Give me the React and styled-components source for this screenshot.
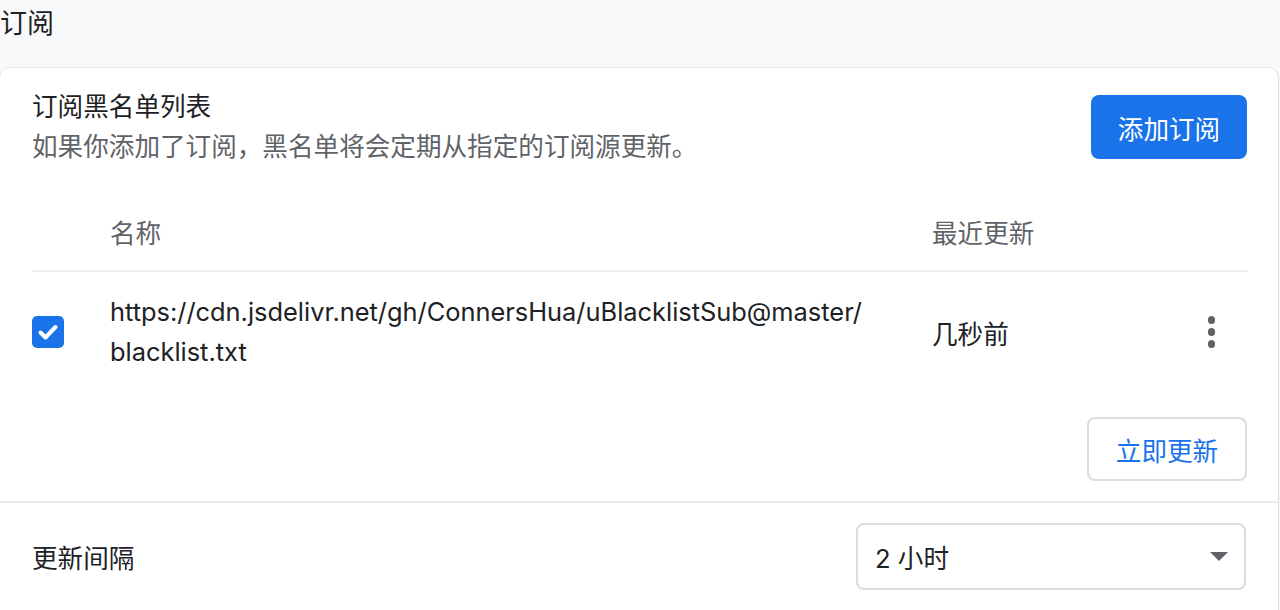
import React from "react";
import styled, { createGlobalStyle } from "styled-components";

const GlobalStyle = createGlobalStyle`
  html, body {
    margin: 0;
    padding: 0;
    background: #f8f9fa;
    font-family: Inter, "Noto Sans CJK SC", sans-serif;
    color: #202124;
  }
`;

export default function App() {
  return (
    <>
      <GlobalStyle />
      <Page>
        <PageTitle>订阅</PageTitle>
        <Card>
          <Section>
            <HeaderRow>
              <HeaderText>
                <Title>订阅黑名单列表</Title>
                <Subtitle>如果你添加了订阅，黑名单将会定期从指定的订阅源更新。</Subtitle>
              </HeaderText>
              <PrimaryButton>添加订阅</PrimaryButton>
            </HeaderRow>

            <Table>
              <HeadRow>
                <Cell />
                <HeadCell>名称</HeadCell>
                <HeadCell>最近更新</HeadCell>
                <Cell />
              </HeadRow>
              <BodyRow>
                <Cell>
                  <Checkbox>
                    <svg width="24" height="24" viewBox="0 0 24 24">
                      <path
                        d="M4.5 12.5 L9.5 17.5 L19.5 7"
                        fill="none"
                        stroke="#fff"
                        strokeWidth="4"
                        strokeLinecap="round"
                        strokeLinejoin="round"
                      />
                    </svg>
                  </Checkbox>
                </Cell>
                <UrlCell>
                  https://cdn.jsdelivr.net/gh/ConnersHua/uBlacklistSub@master/
                  <br />
                  blacklist.txt
                </UrlCell>
                <TextCell>几秒前</TextCell>
                <MenuCell>
                  <Kebab>
                    <Dot />
                    <Dot />
                    <Dot />
                  </Kebab>
                </MenuCell>
              </BodyRow>
            </Table>

            <Actions>
              <OutlineButton>立即更新</OutlineButton>
            </Actions>
          </Section>

          <SettingRow>
            <SettingLabel>更新间隔</SettingLabel>
            <Select>
              <span>2 小时</span>
              <Arrow />
            </Select>
          </SettingRow>
        </Card>
      </Page>
    </>
  );
}

const Page = styled.div`
  width: 1280px;
`;

const PageTitle = styled.h1`
  margin: 0;
  padding: 4px 0 0 0;
  height: 68px;
  box-sizing: border-box;
  font-size: 27px;
  font-weight: 400;
  line-height: 40px;
  color: #202124;
`;

const Card = styled.div`
  width: 1278px;
  background: #fff;
  border-radius: 10px;
  box-shadow: 0 0 0 1px rgba(0, 0, 0, 0.04), 0 1px 3px rgba(60, 64, 67, 0.18);
  box-sizing: border-box;
  padding-bottom: 20px;
`;

const Section = styled.div`
  padding: 19px 30px 20px 32px;
  border-bottom: 2px solid #ebebeb;
`;

const HeaderRow = styled.div`
  display: flex;
  align-items: center;
  justify-content: space-between;
`;

const HeaderText = styled.div`
  display: flex;
  flex-direction: column;
`;

const Title = styled.div`
  font-size: 25.6px;
  line-height: 40px;
  color: #202124;
`;

const Subtitle = styled.div`
  font-size: 25.6px;
  line-height: 40px;
  color: #5f6368;
`;

const PrimaryButton = styled.button`
  width: 156px;
  height: 64px;
  margin-right: 1px;
  border: none;
  border-radius: 8px;
  background: #1a73e8;
  color: #fff;
  font-family: inherit;
  font-size: 25.6px;
  cursor: pointer;
`;

const Table = styled.div`
  margin-top: 26px;
  display: grid;
  grid-template-columns: 78px 1fr 248px 68px;
`;

const HeadRow = styled.div`
  display: contents;
  & > * {
    height: 77px;
    border-bottom: 2px solid #f1f1f1;
  }
`;

const BodyRow = styled.div`
  display: contents;
  & > * {
    padding: 20px 0 22px;
  }
`;

const Cell = styled.div`
  display: flex;
  align-items: center;
`;

const HeadCell = styled(Cell)`
  font-size: 25.6px;
  color: #5f6368;
`;

const TextCell = styled(Cell)`
  font-size: 25.6px;
  color: #202124;
`;

const UrlCell = styled.div`
  font-size: 25.4px;
  line-height: 40px;
  color: #202124;
  padding: 20px 0 22px;
`;

const MenuCell = styled(Cell)`
  justify-content: flex-end;
  padding-right: 33px !important;
`;

const Checkbox = styled.div`
  width: 32px;
  height: 32px;
  border-radius: 5px;
  background: #1a73e8;
  display: flex;
  align-items: center;
  justify-content: center;
`;

const Kebab = styled.div`
  display: flex;
  flex-direction: column;
  gap: 4.5px;
  align-items: center;
`;

const Dot = styled.span`
  width: 7.5px;
  height: 7.5px;
  border-radius: 50%;
  background: #5f6368;
`;

const Actions = styled.div`
  display: flex;
  justify-content: flex-end;
  margin-top: 23px;
`;

const OutlineButton = styled.button`
  width: 160px;
  height: 64px;
  margin-right: 1px;
  border: 2px solid #dadce0;
  border-radius: 8px;
  background: #fff;
  color: #1a73e8;
  font-family: inherit;
  font-size: 25.6px;
  cursor: pointer;
`;

const SettingRow = styled.div`
  display: flex;
  align-items: center;
  justify-content: space-between;
  padding: 20px 32px 20px 32px;
`;

const SettingLabel = styled.div`
  font-size: 25.6px;
  color: #202124;
`;

const Select = styled.div`
  width: 390px;
  height: 67px;
  box-sizing: border-box;
  border: 2px solid #dadce0;
  border-radius: 8px;
  display: flex;
  align-items: center;
  justify-content: space-between;
  padding: 0 16px 0 17px;
  font-size: 25.6px;
  color: #202124;
`;

const Arrow = styled.span`
  width: 0;
  height: 0;
  border-left: 9px solid transparent;
  border-right: 9px solid transparent;
  border-top: 9px solid #5f6368;
`;
